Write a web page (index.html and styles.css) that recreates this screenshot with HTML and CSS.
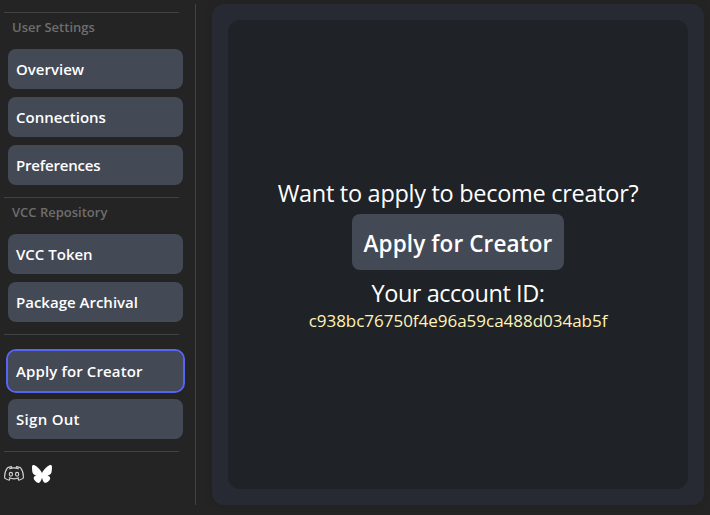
FILE: index.html
```html
<!DOCTYPE html>
<html lang="en">
<head>
<meta charset="utf-8">
<title>Apply for Creator</title>
<link rel="stylesheet" href="styles.css">
</head>
<body>
<div class="layout">
  <nav class="sidebar">
    <hr>
    <div class="group-label">User Settings</div>
    <div class="group">
      <button class="item">Overview</button>
      <button class="item">Connections</button>
      <button class="item item-preferences">Preferences</button>
    </div>
    <hr>
    <div class="group-label">VCC Repository</div>
    <div class="group">
      <button class="item">VCC Token</button>
      <button class="item">Package Archival</button>
    </div>
    <hr>
    <div class="group group-account">
      <button class="item active">Apply for Creator</button>
      <button class="item item-signout">Sign Out</button>
    </div>
    <hr>
    <div class="social">
      <svg width="20" height="20" viewBox="0 0 20 20" fill="none" stroke="#d4d4d4" stroke-width="1.15" stroke-linecap="round" stroke-linejoin="round">
        <path d="M6.2 14.1 5.2 16.2C3.2 15.7 1.9 15 .7 14.1.4 9.8 1.3 6.5 3.4 3.8 4.7 3.2 6 2.8 7.3 2.6L8 4.1Q10 3.8 12 4.1L12.7 2.6C14 2.8 15.3 3.2 16.6 3.8 18.7 6.5 19.6 9.8 19.3 14.1 18.1 15 16.8 15.7 14.8 16.2L13.8 14.1M5.3 13.8Q10 15.9 14.7 13.8M5.6 4.8 7.8 4.1M14.4 4.8 12.2 4.1"/>
        <ellipse cx="6.9" cy="10.3" rx="1.6" ry="1.9"/>
        <ellipse cx="13.1" cy="10.3" rx="1.6" ry="1.9"/>
      </svg>
      <svg width="20" height="20" viewBox="0 0 24 24" fill="#fff">
        <path d="M12 10.8c-1.087-2.114-4.046-6.053-6.798-7.995C2.566.944 1.561 1.266.902 1.565.139 1.908 0 3.08 0 3.768c0 .69.378 5.65.624 6.479.815 2.736 3.713 3.66 6.383 3.364-3.912.58-7.387 2.005-2.83 7.078 5.013 5.19 6.87-1.113 7.823-4.308.953 3.195 2.05 9.271 7.733 4.308 4.267-4.308 1.172-6.498-2.74-7.078 2.67.297 5.568-.628 6.383-3.364.246-.828.624-5.79.624-6.478 0-.69-.139-1.861-.902-2.206-.659-.298-1.664-.62-4.3 1.24C16.046 4.748 13.087 8.687 12 10.8Z"/>
      </svg>
    </div>
  </nav>
  <main class="panel">
    <section class="content">
      <p class="heading">Want to apply to become creator?</p>
      <button class="cta">Apply for Creator</button>
      <p class="heading account">Your account ID:</p>
      <p class="account-id">c938bc76750f4e96a59ca488d034ab5f</p>
    </section>
  </main>
</div>
</body>
</html>
```
FILE: styles.css
```css
* { box-sizing: border-box; }
body {
  margin: 0;
  height: 515px;
  overflow: hidden;
  background: #242424;
  color: #fff;
  font-family: "Open Sans", "Noto Sans", sans-serif;
}
.layout { display: flex; height: 515px; padding: 4px 6px 10px 4px; }
.sidebar {
  width: 192px;
  padding: 8px 16px 0 0;
  border-right: 1px solid #424242;
}
hr { height: 1px; margin: 0; border: 0; background: #424242; }
.group-label {
  height: 36px;
  padding: 3px 0 0 8px;
  color: #6e6e6e;
  font-size: 13px;
  line-height: 22px;
  font-weight: 600;
  white-space: nowrap;
}
.group {
  display: flex;
  flex-direction: column;
  gap: 8px;
  width: 175px;
  margin: 0 0 12px 4px;
}
.group-account { margin-top: 16px; }
button { border: 0; color: #fff; font-family: inherit; font-weight: 600; white-space: nowrap; }
.item {
  height: 40px;
  padding: 0 8px;
  border-radius: 8px;
  background: #444956;
  font-size: 15px;
  line-height: 40px;
  text-align: left;
}
.item-preferences { letter-spacing: -.2px; }
.item-signout { letter-spacing: .3px; }
.active { outline: 2px solid #5865f2; letter-spacing: .12px; }
.social { display: flex; gap: 8px; padding-top: 12px; }
.panel {
  flex: 1;
  display: flex;
  margin-left: 16px;
  padding: 16px;
  border-radius: 12px;
  background: #272a32;
  box-shadow: 0 0 8px #0000001f;
}
.content {
  flex: 1;
  display: flex;
  flex-direction: column;
  align-items: center;
  padding-top: 157px;
  border-radius: 12px;
  background: #1f2226;
}
p { margin: 0; white-space: nowrap; }
.heading { height: 32px; font-size: 23.5px; line-height: 32px; letter-spacing: -.29px; }
.account { letter-spacing: -.45px; }
.cta {
  width: 212px;
  height: 56px;
  margin: 5px 0 7px;
  padding: 2px 0 0;
  border-radius: 8px;
  background: #444956;
  font-size: 22.5px;
  letter-spacing: .12px;
}
.account-id { color: #fff3b8; font-size: 17px; line-height: 23px; letter-spacing: -.02px; }
```
